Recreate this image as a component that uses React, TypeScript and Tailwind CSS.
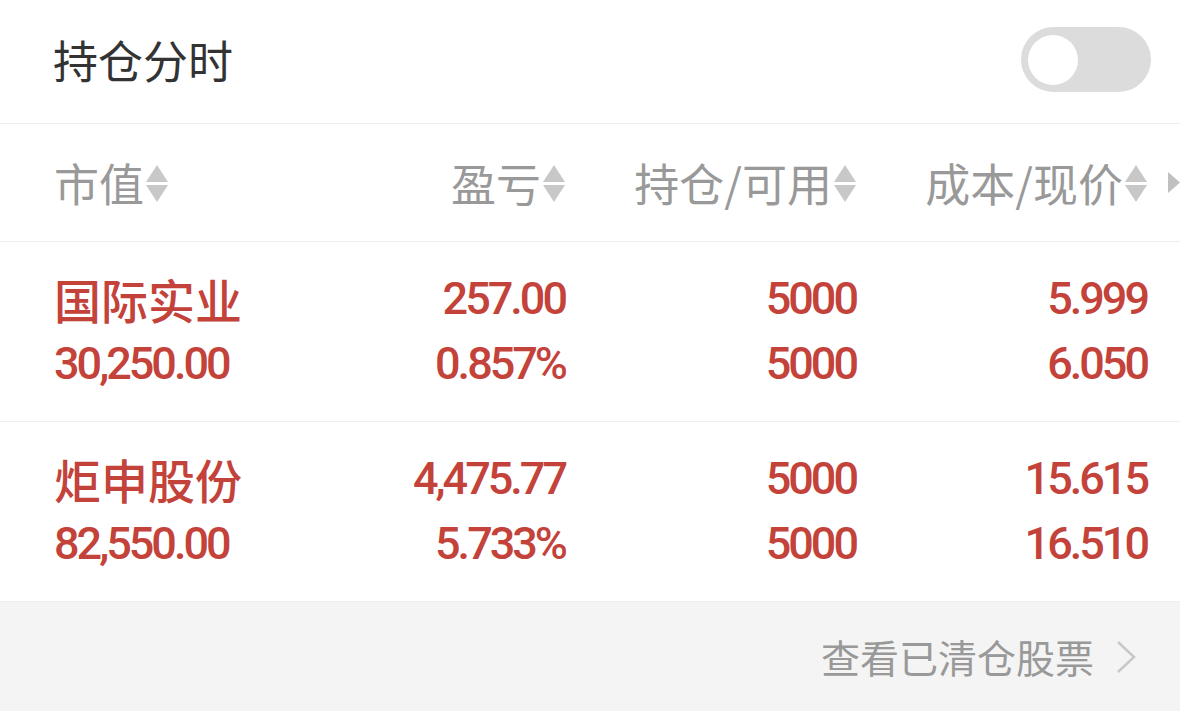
import React from "react";

const rows = [
  { name: "国际实业", value: "30,250.00", pl: "257.00", plPct: "0.857%", hold: "5000", avail: "5000", cost: "5.999", price: "6.050" },
  { name: "炬申股份", value: "82,550.00", pl: "4,475.77", plPct: "5.733%", hold: "5000", avail: "5000", cost: "15.615", price: "16.510" },
];

const cjk = { fontFamily: '"Noto Sans CJK SC", "Noto Sans", sans-serif' };
const num = { fontFamily: 'Roboto, "Noto Sans CJK SC", sans-serif' };

function SortIcon() {
  return (
    <svg viewBox="0 0 22 38" className="ml-[2px] h-[38px] w-[22px] shrink-0" fill="#c8c8c8">
      <path d="M11 1 L22 18 L0 18 Z" />
      <path d="M0 21 L22 21 L11 38 Z" />
    </svg>
  );
}

function HeadCell({ label, right }: { label: string; right?: boolean }) {
  return (
    <div className={`flex items-center ${right ? "justify-end" : "justify-start"}`}>
      <span className="text-[45px] leading-none text-[#999999]" style={cjk}>{label}</span>
      <SortIcon />
    </div>
  );
}

export default function App() {
  return (
    <div className="flex h-[711px] w-[1180px] flex-col bg-white">
      <div className="flex h-[124px] items-center justify-between border-b border-[#eeeeee] pl-[53px] pr-[29px]">
        <span className="-mt-[4px] text-[45px] leading-none text-[#333333]" style={cjk}>持仓分时</span>
        <div className="-mt-[4px] flex h-[65px] w-[130px] items-center rounded-full bg-[#dcdcdc] pl-[7px]">
          <div className="h-[50px] w-[50px] rounded-full bg-white" />
        </div>
      </div>

      <div className="relative grid h-[118px] grid-cols-[245px_266px_291px_291px] items-center border-b border-[#eeeeee] pl-[54px]">
        <HeadCell label="市值" />
        <HeadCell label="盈亏" right />
        <HeadCell label="持仓/可用" right />
        <HeadCell label="成本/现价" right />
        <svg viewBox="0 0 12 21" className="absolute right-0 top-[48px] h-[21px] w-[12px]" fill="#c0c0c0">
          <path d="M0 0 L12 10.5 L0 21 Z" />
        </svg>
      </div>

      {rows.map((r) => (
        <div
          key={r.name}
          className="grid h-[180px] grid-cols-[245px_266px_291px_291px] content-center gap-y-[17px] border-b border-[#eeeeee] pl-[54px] text-[#c3423a]"
        >
          <div className="text-[47px] font-medium leading-[48px]" style={cjk}>{r.name}</div>
          <div className="text-right text-[45px] font-medium leading-[48px] tracking-[-3px]" style={num}>{r.pl}</div>
          <div className="text-right text-[45px] font-medium leading-[48px] tracking-[-3px]" style={num}>{r.hold}</div>
          <div className="text-right text-[45px] font-medium leading-[48px] tracking-[-3px]" style={num}>{r.cost}</div>
          <div className="text-[45px] font-medium leading-[48px] tracking-[-3px]" style={num}>{r.value}</div>
          <div className="text-right text-[45px] font-medium leading-[48px] tracking-[-3px]" style={num}>{r.plPct}</div>
          <div className="text-right text-[45px] font-medium leading-[48px] tracking-[-3px]" style={num}>{r.avail}</div>
          <div className="text-right text-[45px] font-medium leading-[48px] tracking-[-3px]" style={num}>{r.price}</div>
        </div>
      ))}

      <div className="flex flex-1 items-center justify-end bg-[#f4f4f4] pr-[44px]">
        <span className="text-[39px] leading-none text-[#999999]" style={cjk}>查看已清仓股票</span>
        <svg viewBox="0 0 20 34" className="ml-[22px] h-[34px] w-[20px]" fill="none" stroke="#c8c8c8" strokeWidth={2.5}>
          <path d="M2 2 L18 17 L2 32" />
        </svg>
      </div>
    </div>
  );
}
